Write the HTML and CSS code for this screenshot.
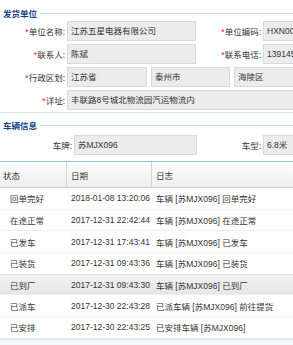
FILE: index.html
```html
<!DOCTYPE html>
<html lang="zh-CN">
<head>
    <meta charset="UTF-8">
    <meta name="viewport" content="width=device-width, initial-scale=1.0">
    <title>发货单位</title>
    <link rel="stylesheet" href="styles.css">
</head>
<body>
    <section class="group">
        <div class="group-title">发货单位</div>
        <div class="form">
            <div class="form-row">
                <label><i>*</i>单位名称:</label>
                <div class="field">江苏五星电器有限公司</div>
                <label><i>*</i>单位编码:</label>
                <div class="field">HXN00123</div>
            </div>
            <div class="form-row">
                <label><i>*</i>联系人:</label>
                <div class="field">陈斌</div>
                <label><i>*</i>联系电话:</label>
                <div class="field">13914578562</div>
            </div>
            <div class="form-row">
                <label><i>*</i>行政区划:</label>
                <div class="selects">
                    <div class="field">江苏省</div>
                    <div class="field">泰州市</div>
                    <div class="field">海陵区</div>
                </div>
            </div>
            <div class="form-row">
                <label><i>*</i>详址:</label>
                <div class="field wide">丰联路8号城北物流园汽运物流内</div>
            </div>
        </div>
    </section>

    <section class="group vehicle">
        <div class="group-title">车辆信息</div>
        <div class="form-row car-row">
            <label>车牌:</label>
            <div class="field">苏MJX096</div>
            <label>车型:</label>
            <div class="field">6.8米</div>
        </div>
    </section>

    <div class="grid">
        <div class="grid-row grid-head">
            <div class="cell">状态</div>
            <div class="cell">日期</div>
            <div class="cell">日志</div>
        </div>
        <div class="grid-row">
            <div class="cell">回单完好</div>
            <div class="cell">2018-01-08 13:20:06</div>
            <div class="cell">车辆 [苏MJX096] 回单完好</div>
        </div>
        <div class="grid-row">
            <div class="cell">在途正常</div>
            <div class="cell">2017-12-31 22:42:44</div>
            <div class="cell">车辆 [苏MJX096] 在途正常</div>
        </div>
        <div class="grid-row">
            <div class="cell">已发车</div>
            <div class="cell">2017-12-31 17:43:41</div>
            <div class="cell">车辆 [苏MJX096] 已发车</div>
        </div>
        <div class="grid-row">
            <div class="cell">已装货</div>
            <div class="cell">2017-12-31 09:43:36</div>
            <div class="cell">车辆 [苏MJX096] 已装货</div>
        </div>
        <div class="grid-row hover">
            <div class="cell">已到厂</div>
            <div class="cell">2017-12-31 09:43:30</div>
            <div class="cell">车辆 [苏MJX096] 已到厂</div>
        </div>
        <div class="grid-row">
            <div class="cell">已派车</div>
            <div class="cell">2017-12-30 22:43:28</div>
            <div class="cell">已派车辆 [苏MJX096] 前往提货</div>
        </div>
        <div class="grid-row">
            <div class="cell">已安排</div>
            <div class="cell">2017-12-30 22:43:25</div>
            <div class="cell">已安排车辆 [苏MJX096]</div>
        </div>
        <div class="grid-foot"></div>
    </div>
</body>
</html>
```

FILE: styles.css
```css
:root {
    --text-color: #333;
    --title-color: #15428b;
    --line-color: #c9d6e6;
    --field-bg: #ececec;
    --field-border: #d9d9d9;
}

* {
    margin: 0;
    padding: 0;
    box-sizing: border-box;
}

body {
    width: 293px;
    height: 345px;
    overflow: hidden;
    font-family: "Liberation Sans", "Noto Sans CJK SC", sans-serif;
    font-size: 8.5px;
    color: var(--text-color);
    background: #fff;
}

/* field groups */
.group {
    border-bottom: 1px solid #dde4ee;
    padding-bottom: 2px;
}

.group.vehicle {
    border-bottom: none;
    padding-bottom: 0;
}

.group-title {
    display: flex;
    align-items: center;
    height: 12px;
    margin-top: 7px;
    padding-left: 3px;
    color: var(--title-color);
    font-weight: bold;
}

.vehicle .group-title {
    margin-top: 6px;
}

.group-title::after {
    content: '';
    flex: 1;
    height: 1px;
    margin-left: 3px;
    background: var(--line-color);
}

.form {
    display: flex;
    flex-direction: column;
    gap: 3px;
    padding-top: 2px;
}

.form-row {
    display: grid;
    grid-template-columns: 67px 129px 67px 130px;
    height: 20px;
    align-items: center;
}

.form-row label {
    text-align: right;
    padding-right: 2px;
    white-space: nowrap;
}

.form-row label i {
    font-style: normal;
    color: #e02020;
}

.field {
    height: 20px;
    line-height: 18px;
    padding-left: 3px;
    border: 1px solid var(--field-border);
    background: var(--field-bg);
    white-space: nowrap;
    overflow: hidden;
}

.selects {
    grid-column: span 3;
    display: grid;
    grid-template-columns: 80px 79px 80px;
    gap: 4px;
}

.field.wide {
    grid-column: span 3;
}

.car-row {
    grid-template-columns: 74px 123px 66px 130px;
    margin-top: 4px;
}

/* log grid */
.grid {
    margin-top: 6px;
    border-top: 1px solid #99bbe8;
}

.grid-row {
    display: grid;
    grid-template-columns: 67px 85px 1fr;
    height: 21.7px;
    align-items: center;
    border-bottom: 1px solid #ededed;
    white-space: nowrap;
}

.grid-row .cell {
    padding-left: 4px;
    overflow: hidden;
}

.grid-row .cell:first-child {
    padding-left: 10px;
}

.grid-head {
    height: 26px;
    background: linear-gradient(#fdfdfd, #efefef);
    border-bottom: 1px solid #d0d0d0;
}

.grid-head .cell {
    height: 100%;
    display: flex;
    align-items: center;
    border-right: 1px solid #d6d6d6;
}

.grid-head .cell:first-child {
    padding-left: 3px;
}

.grid-head .cell:last-child {
    border-right: none;
}

.grid-row.hover {
    background: linear-gradient(#f2f2f2, #e6e6e6);
    border-top: 1px solid #e0e0e0;
    margin-top: -1px;
}

.grid-foot {
    height: 10px;
    border-top: 1px solid #dfe6ef;
    background: #f4f6f9;
}
```
